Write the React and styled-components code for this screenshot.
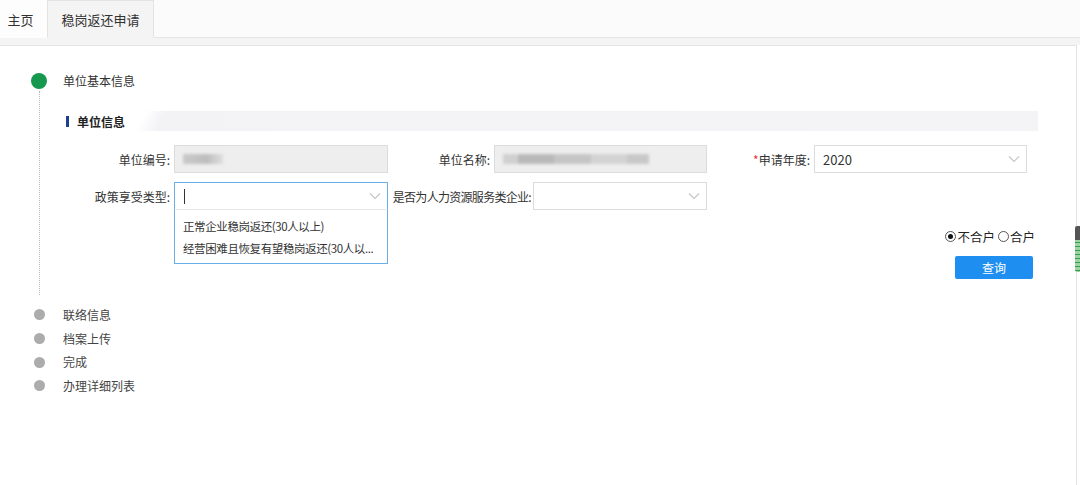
import React from 'react'
import styled, {createGlobalStyle} from 'styled-components'

const GlobalStyle = createGlobalStyle`
  html, body {
    margin: 0;
    padding: 0;
    background: #fff;
    font-family: "Noto Sans CJK SC", "Noto Sans", sans-serif;
    font-size: 12px;
    color: #333;
  }
  #root {
    height: 485px;
    overflow: hidden;
  }
`;

const Page = styled.div`
  position: relative;
  height: 485px;
  display: flex;
  flex-direction: column;
`;

const TabBar = styled.div`
  height: 38px;
  display: flex;
  align-items: stretch;
  background: #fbfbfb;
  border-bottom: 1px solid #e6e6e6;
  box-sizing: border-box;
`;

const Tab = styled.div`
  width: ${p => p.width}px;
  display: flex;
  align-items: center;
  justify-content: center;
  font-size: 13px;
  color: #333;
  box-sizing: border-box;
  margin-bottom: -1px;
  padding-right: ${p => p.active ? 0 : 6}px;
  background: ${p => p.active ? '#f4f4f4' : '#fdfdfd'};
  border: ${p => p.active ? '1px solid #e3e3e3' : 'none'};
  border-bottom: ${p => p.active ? '1px solid #f4f4f4' : 'none'};
`;

const Gap = styled.div`
  height: 7px;
  background: #f4f4f4;
`;

const Panel = styled.div`
  flex: 1;
  margin-right: 3px;
  background: #fff;
  border-top: 1px solid #e4e4e4;
  border-right: 1px solid #e4e4e4;
  padding: 27px 0 0 31px;
`;

const Step = styled.div`
  display: grid;
  grid-template-columns: 16px 1fr;
  column-gap: 16px;
  align-items: center;
  height: ${p => p.h}px;
`;

const Dot = styled.span`
  justify-self: center;
  width: ${p => p.active ? 16 : 11}px;
  height: ${p => p.active ? 16 : 11}px;
  border-radius: 50%;
  background: ${p => p.active ? '#16994f' : '#acacac'};
`;

const StepTitle = styled.span`
  color: ${p => p.active ? '#333' : '#444'};
  line-height: 16px;
`;

const StepBody = styled.div`
  display: grid;
  grid-template-columns: 16px 1fr;
  column-gap: 15px;
  padding-top: 2px;
`;

const Rail = styled.div`
  justify-self: center;
  width: 0;
  border-left: 1px dotted #b8b8b8;
  margin-bottom: 8px;
`;

const Body = styled.div`
  width: 976px;
  padding: 20px 0 24px;
`;

const SectionHead = styled.div`
  height: 20px;
  display: flex;
  align-items: center;
  padding-left: 4px;
  background: linear-gradient(118deg, #fff 0, #fff 74px, #f3f3f6 92px, #f4f4f6 100%);
  font-weight: bold;
  color: #222;
  gap: 8px;
`;

const Mark = styled.span`
  width: 3px;
  height: 11px;
  background: #1d3f8e;
`;

const Form = styled.div`
  margin-top: 14px;
  display: flex;
  flex-direction: column;
  gap: 9px;
`;

const Row = styled.div`
  display: flex;
  gap: 4px;
`;

const Field = styled.div`
  display: flex;
  align-items: center;
  gap: ${p => p.gap ?? 4}px;
`;

const Label = styled.label`
  width: ${p => p.w}px;
  text-align: right;
  white-space: nowrap;
  color: #333;
  letter-spacing: ${p => p.tight ? '-0.7px' : '0'};
`;

const Star = styled.span`
  color: #e33;
`;

const Control = styled.div`
  position: relative;
  width: ${p => p.w}px;
  height: 28px;
  box-sizing: border-box;
  border: 1px solid ${p => p.focus ? '#6aaee6' : '#dcdcdc'};
  background: ${p => p.disabled ? '#eeeeee' : '#fff'};
  display: flex;
  align-items: center;
  padding: 0 8px;
  font-size: 13px;
  color: #333;
`;

const Blur = styled.span`
  height: 10px;
  width: ${p => p.w}px;
  background: ${p => p.bg};
  filter: blur(1.5px);
`;

const Caret = styled.span`
  width: 1px;
  height: 15px;
  background: #333;
  margin-left: 1px;
`;

const Chevron = styled.svg`
  position: absolute;
  right: 6px;
  top: 9px;
`;

const Menu = styled.div`
  position: absolute;
  left: -1px;
  top: 26px;
  width: ${p => p.w}px;
  box-sizing: border-box;
  background: #fff;
  border: 1px solid #6aaee6;
  border-top: 1px solid #e8e8e8;
  padding: 5px 0 4px;
  z-index: 2;
`;

const Option = styled.div`
  height: 22px;
  line-height: 22px;
  padding: 0 4px 0 8px;
  white-space: nowrap;
  font-size: 11.5px;
  letter-spacing: -0.4px;
  color: #333;
`;

const Actions = styled.div`
  margin-top: 17px;
  display: flex;
  flex-direction: column;
  align-items: flex-end;
  gap: 10px;
  padding-right: 3px;
`;

const Radios = styled.div`
  display: flex;
  align-items: center;
  font-size: 12.5px;
  color: #222;
  gap: 3px;
`;

const Radio = styled.span`
  display: inline-flex;
  align-items: center;
  gap: 1px;
`;

const Circle = styled.span`
  width: 9px;
  height: 9px;
  border: 1px solid #555;
  border-radius: 50%;
  display: inline-flex;
  align-items: center;
  justify-content: center;
  &::after {
    content: "";
    width: 5px;
    height: 5px;
    border-radius: 50%;
    background: ${p => p.checked ? '#111' : 'transparent'};
  }
`;

const Button = styled.button`
  width: 78px;
  height: 23px;
  margin-right: 2px;
  border: none;
  border-radius: 2px;
  background: #1e8ff0;
  color: #fff;
  font-family: inherit;
  font-size: 12px;
  padding: 0;
`;

const Scroll = styled.div`
  position: absolute;
  right: 0;
  top: 226px;
  width: 5px;
  height: 46px;
  border-radius: 2px 0 0 2px;
  background: linear-gradient(#555 0 14px, transparent 14px),
    repeating-linear-gradient(#3a9a4e 0 1px, #9ed3a4 1px 4px);
`;

const ChevronIcon = () => (
  <Chevron width="12" height="8" viewBox="0 0 12 8">
    <path d="M1 1.5 L6 6.5 L11 1.5" fill="none" stroke="#c6c6c6" strokeWidth="1.2"/>
  </Chevron>
);

const otherSteps = ['联络信息', '档案上传', '完成', '办理详细列表'];

export default function App() {
  return (
    <Page>
      <GlobalStyle/>
      <TabBar>
        <Tab width={47}>主页</Tab>
        <Tab width={107} active>稳岗返还申请</Tab>
      </TabBar>
      <Gap/>
      <Panel>
        <Step h={16}>
          <Dot active/>
          <StepTitle active>单位基本信息</StepTitle>
        </Step>
        <StepBody>
          <Rail/>
          <Body>
            <SectionHead><Mark/>单位信息</SectionHead>
            <Form>
              <Row>
                <Field>
                  <Label w={108}>单位编号:</Label>
                  <Control w={214} disabled>
                    <Blur w={40} bg="linear-gradient(90deg,#c9c9c9,#bdbdbd 60%,#dedede)"/>
                  </Control>
                </Field>
                <Field>
                  <Label w={98}>单位名称:</Label>
                  <Control w={213} disabled>
                    <Blur w={146} bg="linear-gradient(90deg,#d0d0d0 0 10%,#b9b9b9 10% 35%,#c5c5c5 35% 60%,#d3d3d3 60% 85%,#c8c8c8 85%)"/>
                  </Control>
                </Field>
                <Field>
                  <Label w={99}><Star>*</Star>申请年度:</Label>
                  <Control w={213}>
                    2020
                    <ChevronIcon/>
                  </Control>
                </Field>
              </Row>
              <Row>
                <Field>
                  <Label w={108}>政策享受类型:</Label>
                  <Control w={214} focus>
                    <Caret/>
                    <ChevronIcon/>
                    <Menu w={214}>
                      <Option>正常企业稳岗返还(30人以上)</Option>
                      <Option>经营困难且恢复有望稳岗返还(30人以...</Option>
                    </Menu>
                  </Control>
                </Field>
                <Field gap={2}>
                  <Label w={139} tight>是否为人力资源服务类企业:</Label>
                  <Control w={174}>
                    <ChevronIcon/>
                  </Control>
                </Field>
              </Row>
            </Form>
            <Actions>
              <Radios>
                <Radio><Circle checked/>不合户</Radio>
                <Radio><Circle/>合户</Radio>
              </Radios>
              <Button>查询</Button>
            </Actions>
          </Body>
        </StepBody>
        {otherSteps.map(s => (
          <Step h={23.7} key={s}>
            <Dot/>
            <StepTitle>{s}</StepTitle>
          </Step>
        ))}
      </Panel>
      <Scroll/>
    </Page>
  )
}
